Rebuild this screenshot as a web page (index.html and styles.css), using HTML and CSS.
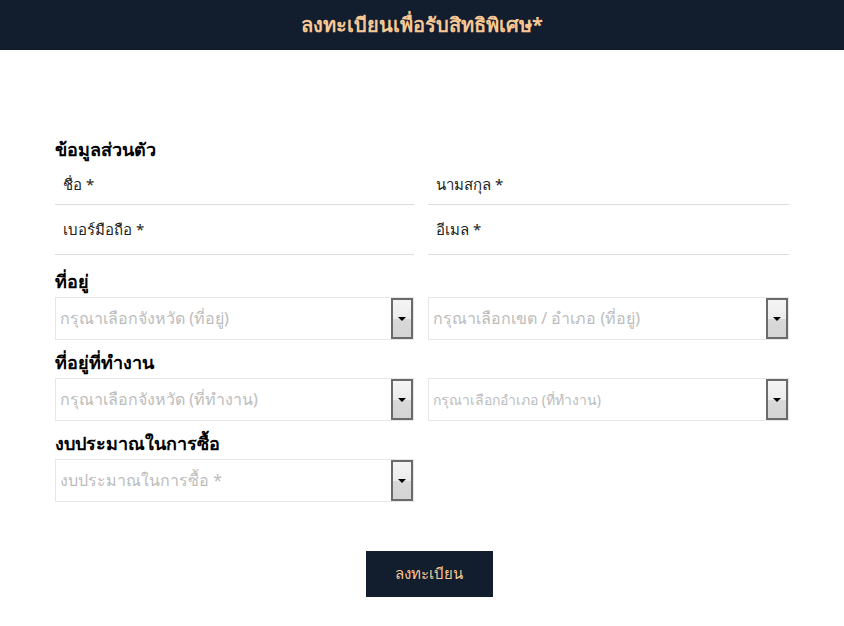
FILE: index.html
```html
<!DOCTYPE html>
<html lang="th">
<head>
<meta charset="utf-8">
<title>ลงทะเบียน</title>
<link rel="stylesheet" href="styles.css">
</head>
<body>
<header class="topbar">
  <h1 class="title">ลงทะเบียนเพื่อรับสิทธิพิเศษ*</h1>
</header>
<main class="form">
  <h2 class="section">ข้อมูลส่วนตัว</h2>
  <div class="grid">
    <div class="field">ชื่อ *</div>
    <div class="field">นามสกุล *</div>
    <div class="field">เบอร์มือถือ *</div>
    <div class="field">อีเมล *</div>
  </div>
  <h2 class="section spaced">ที่อยู่</h2>
  <div class="grid">
    <div class="select"><span class="select-text">กรุณาเลือกจังหวัด (ที่อยู่)</span><span class="arrow"></span></div>
    <div class="select"><span class="select-text">กรุณาเลือกเขต / อำเภอ (ที่อยู่)</span><span class="arrow"></span></div>
  </div>
  <h2 class="section">ที่อยู่ที่ทำงาน</h2>
  <div class="grid">
    <div class="select"><span class="select-text">กรุณาเลือกจังหวัด (ที่ทำงาน)</span><span class="arrow"></span></div>
    <div class="select"><span class="select-text small">กรุณาเลือกอำเภอ (ที่ทำงาน)</span><span class="arrow"></span></div>
  </div>
  <h2 class="section">งบประมาณในการซื้อ</h2>
  <div class="grid">
    <div class="select"><span class="select-text">งบประมาณในการซื้อ *</span><span class="arrow"></span></div>
  </div>
  <div class="actions">
    <button class="submit" type="button">ลงทะเบียน</button>
  </div>
</main>
</body>
</html>
```
FILE: styles.css
```css
* { box-sizing: border-box; }
body {
  margin: 0;
  font-family: "Noto Sans", "Open Sans", sans-serif;
  color: #111;
  background: #fff;
}
.topbar {
  height: 50px;
  background: #121d2e;
  display: flex;
  align-items: center;
  justify-content: center;
}
.title {
  margin: 0;
  font-size: 20px;
  font-weight: 700;
  color: #f7c894;
}
.form {
  width: 734px;
  margin: 83px 0 0 55px;
}
.section {
  margin: 0;
  font-size: 18px;
  font-weight: 700;
  color: #000;
  line-height: 32px;
}
.section.spaced { margin-top: 10px; }
.grid {
  display: grid;
  grid-template-columns: 359px 361px;
  column-gap: 14px;
}
.field {
  height: 50px;
  border-bottom: 1px solid #dcdcdc;
  padding: 0 8px;
  display: flex;
  align-items: center;
  font-size: 15px;
  color: #222;
}
.grid .field:nth-child(-n+2) { height: 40px; }
.select {
  height: 43px;
  border: 1px solid #e6e6e6;
  display: flex;
  align-items: center;
  margin-bottom: 6px;
}
.select-text {
  flex: 1;
  padding-left: 4px;
  font-size: 16px;
  color: #bcbcbc;
}
.select-text.small { font-size: 14px; }
.arrow {
  align-self: stretch;
  width: 22px;
  border: 2px solid #6a6a6a;
  background: linear-gradient(#f4f4f4 0%, #ececec 50%, #d9d9d9 52%, #d4d4d4 100%);
  position: relative;
}
.arrow::after {
  content: "";
  position: absolute;
  left: 5px;
  top: 17px;
  border-left: 4px solid transparent;
  border-right: 4px solid transparent;
  border-top: 4px solid #000;
}
.actions {
  display: flex;
  justify-content: center;
  margin-top: 43px;
}
.submit {
  width: 127px;
  height: 46px;
  margin-left: 14px;
  border: 0;
  background: #121d2e;
  color: #f7c894;
  font-family: inherit;
  font-size: 15px;
}
```
